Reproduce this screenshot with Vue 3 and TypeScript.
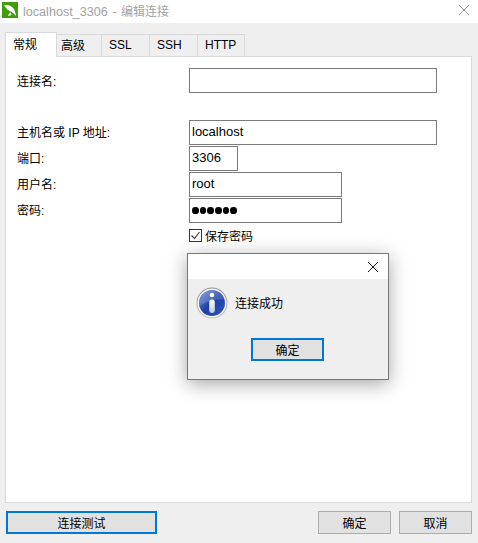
<template>
  <div class="window">
    <div class="titlebar">
      <svg class="logo" width="16" height="16" viewBox="0 0 16 16">
        <rect width="16" height="16" fill="#3f9c0a" />
        <path d="M2 3C6 2.500 9.500 3.500 11.500 6.500 12.800 8.500 13.500 11 14 14 12.500 12.500 11 10.500 9 9.500 6.500 8.500 4 7 2 3z" fill="#fff" />
        <path d="M6 14c.5-1.800 1.300-3 2.800-3.800L9.500 13z" fill="#fff" />
      </svg>
      <span class="title">localhost_3306 - <span class="cjk">编辑连接</span></span>
      <svg class="close-main" width="10" height="10" viewBox="0 0 10 10">
        <path d="M0 0l10 10M10 0L0 10" stroke="#9a9a9a" stroke-width="1" fill="none" />
      </svg>
    </div>

    <div class="content">
      <div class="tabs">
        <div
          v-for="(tab, i) in tabs"
          :key="tab.label"
          class="tab"
          :class="{ active: i === 0 }"
          :style="{ width: tab.width + 'px' }"
        >{{ tab.label }}</div>
      </div>

      <div class="panel">
        <div class="row name-row">
          <label>连接名:</label>
          <div class="input wide"></div>
        </div>
        <div class="row">
          <label>主机名或 IP 地址:</label>
          <div class="input wide">localhost</div>
        </div>
        <div class="row">
          <label>端口:</label>
          <div class="input port">3306</div>
        </div>
        <div class="row">
          <label>用户名:</label>
          <div class="input medium">root</div>
        </div>
        <div class="row">
          <label>密码:</label>
          <div class="input medium dots">
            <i v-for="n in 6" :key="n"></i>
          </div>
        </div>
        <div class="row check-row">
          <label></label>
          <svg class="checkbox" width="13" height="13" viewBox="0 0 13 13">
            <rect x="0.5" y="0.5" width="12" height="12" fill="#fff" stroke="#333" />
            <path d="M2.500 6.500l3 3 5-6.500" stroke="#333" stroke-width="1.100" fill="none" />
          </svg>
          <span>保存密码</span>
        </div>
      </div>

      <div class="footer">
        <button class="btn test focused">连接测试</button>
        <div class="right">
          <button class="btn">确定</button>
          <button class="btn">取消</button>
        </div>
      </div>
    </div>

    <div class="dialog">
      <div class="dialog-title">
        <svg width="10" height="10" viewBox="0 0 10 10">
          <path d="M0 0l10 10M10 0L0 10" stroke="#111" stroke-width="1" fill="none" />
        </svg>
      </div>
      <div class="dialog-body">
        <div class="message">
          <svg width="32" height="32" viewBox="0 0 32 32">
            <defs>
              <linearGradient id="blue" x1="0" y1="0" x2="1" y2="1">
                <stop offset="0" stop-color="#6f8fe0" />
                <stop offset="0.5" stop-color="#1d3fa6" />
                <stop offset="1" stop-color="#2c55bd" />
              </linearGradient>
              <linearGradient id="ring" x1="0" y1="0" x2="0" y2="1">
                <stop offset="0" stop-color="#8f8f8f" />
                <stop offset="1" stop-color="#c4c4c4" />
              </linearGradient>
              <linearGradient id="stem" x1="0" y1="0" x2="0" y2="1">
                <stop offset="0" stop-color="#ffffff" />
                <stop offset="1" stop-color="#c3c9d8" />
              </linearGradient>
            </defs>
            <circle cx="16" cy="16" r="15.500" fill="url(#ring)" />
            <circle cx="16" cy="16" r="14.500" fill="#f4f4f4" />
            <circle cx="16" cy="16" r="13" fill="url(#blue)" />
            <path d="M3.500 19C9 15 18 12 28.500 12 26 6 21 3 16 3 9 3 3 9 3.500 19z" fill="#fff" opacity="0.18" />
            <circle cx="16" cy="8" r="2.300" fill="#fff" />
            <rect x="13.200" y="12.500" width="5.600" height="13.500" rx="2.400" fill="url(#stem)" />
          </svg>
          <span class="message-text">连接成功</span>
        </div>
        <button class="btn focused dialog-btn">确定</button>
      </div>
    </div>
  </div>
</template>

<script setup lang="ts">
const tabs: { label: string; width: number }[] = [
  { label: '常规', width: 52 },
  { label: '高级', width: 45 },
  { label: 'SSL', width: 48 },
  { label: 'SSH', width: 48 },
  { label: 'HTTP', width: 47 }
]
</script>

<style>
html,
body {
  margin: 0;
  background: #efefef;
}
</style>

<style scoped>
.window {
  position: relative;
  width: 478px;
  height: 543px;
  overflow: hidden;
  background: #efefef;
  font-family: "Liberation Sans", "Noto Sans CJK SC", sans-serif;
  font-size: 12px;
  color: #000;
}
.titlebar {
  height: 23px;
  background: #fff;
  display: flex;
  align-items: center;
  padding: 0 0 3px 2px;
  box-sizing: border-box;
}
.logo {
  flex: none;
}
.title {
  margin-left: 5px;
  color: #a3a3a3;
  font-size: 12.6px;
  word-spacing: 1px;
}
.cjk {
  font-size: 12px;
}
.close-main {
  margin-left: auto;
  margin-right: 9px;
}
.content {
  padding: 9px 6px 0 5px;
}
.tabs {
  display: flex;
  height: 24px;
  align-items: flex-end;
  position: relative;
  z-index: 1;
}
.tab {
  height: 22px;
  box-sizing: border-box;
  display: flex;
  align-items: center;
  padding: 0 0 2px 7px;
  border: 1px solid #d9d9d9;
  border-left: none;
  border-bottom: none;
}
.tab:nth-child(2) {
  padding-left: 4px;
}
.tab.active {
  height: 25px;
  background: #fff;
  border-left: 1px solid #d9d9d9;
  padding-bottom: 4px;
  margin-bottom: -1px;
}
.panel {
  height: 447px;
  box-sizing: border-box;
  background: #fff;
  border: 1px solid #d9d9d9;
  padding: 11px 0 0 11px;
}
.row {
  display: flex;
  align-items: center;
  height: 25px;
  margin-bottom: 1px;
}
.name-row {
  margin-bottom: 27px;
}
.row label {
  width: 172px;
  flex: none;
  padding-bottom: 2px;
}
.name-row label {
  padding-bottom: 0;
}
.input {
  height: 25px;
  box-sizing: border-box;
  border: 1px solid #7a7a7a;
  background: #fff;
  padding: 0 2px;
  line-height: 21px;
  font-size: 13px;
}
.wide {
  width: 248px;
}
.medium {
  width: 153px;
}
.port {
  width: 49px;
}
.dots {
  display: flex;
  align-items: center;
  gap: 1px;
}
.dots i {
  width: 6.700px;
  height: 6.700px;
  border-radius: 50%;
  background: #000;
}
.check-row {
  height: 22px;
}
.checkbox {
  margin-right: 3px;
}
.footer {
  display: flex;
  justify-content: space-between;
  margin-top: 8px;
  padding-left: 1px;
}
.right {
  display: flex;
  gap: 8px;
}
.btn {
  width: 73px;
  height: 23px;
  box-sizing: border-box;
  border: 1px solid #adadad;
  background: #e1e1e1;
  font: inherit;
  padding: 0;
  color: #000;
}
.test {
  width: 151px;
}
.focused {
  border: 2px solid #0078d7;
}
.dialog {
  position: absolute;
  left: 187px;
  top: 253px;
  width: 202px;
  height: 127px;
  box-sizing: border-box;
  border: 1px solid #777;
  background: #efefef;
  box-shadow: 0 4px 18px rgba(0, 0, 0, 0.35);
}
.dialog-title {
  height: 25px;
  background: #fff;
  display: flex;
  align-items: center;
  justify-content: flex-end;
  padding-right: 10px;
}
.dialog-body {
  display: flex;
  flex-direction: column;
}
.message {
  display: flex;
  align-items: center;
  gap: 7px;
  margin: 7px 0 0 8px;
  height: 34px;
}
.message-text {
  padding-bottom: 2px;
}
.dialog-btn {
  margin: 18px 0 0 63px;
}
</style>
